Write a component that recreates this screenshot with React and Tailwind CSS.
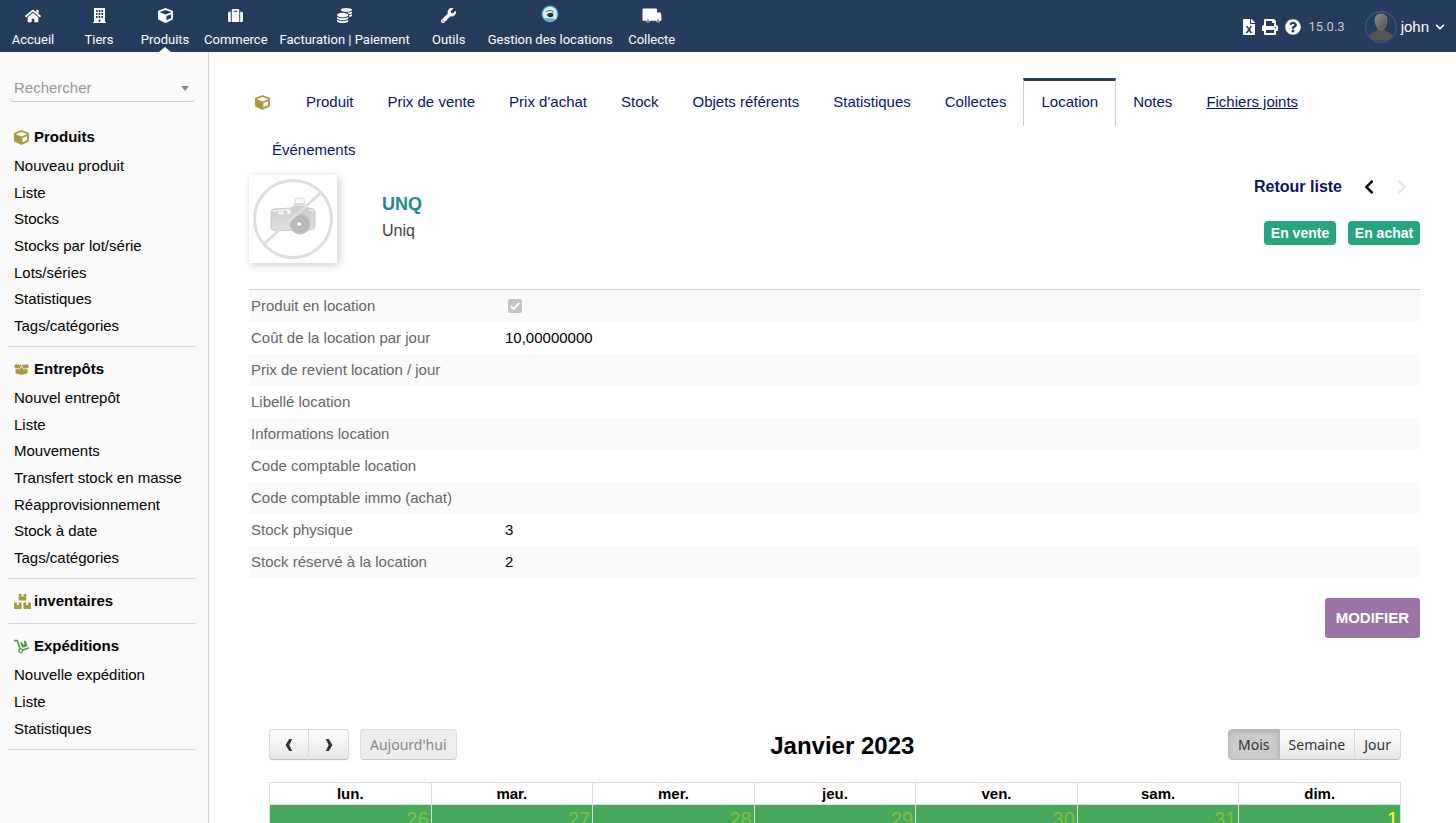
import {
  FaHome, FaCube, FaSuitcase, FaCoins, FaWrench, FaFileExcel, FaPrint,
  FaQuestionCircle, FaBoxOpen, FaBoxes, FaDolly, FaChevronLeft, FaChevronRight, FaChevronDown,
} from "react-icons/fa";

function BuildingIcon() {
  return (
    <svg viewBox="0 0 13 15" className="h-[15px] w-[13px]" aria-hidden="true">
      <path d="M1 0h11v14h1v1H0v-1h1z" fill="#fff" />
      <path d="M3 2h1.600v2H3zM5.700 2h1.600v2H5.700zM8.400 2H10v2H8.400zM3 5h1.600v2H3zM5.700 5h1.600v2H5.700zM8.400 5H10v2H8.400zM3 8h1.600v2H3zM5.700 8h1.600v2H5.700zM8.400 8H10v2H8.400zM5.700 11.500h1.600V14H5.700z" fill="#263c5c" />
    </svg>
  );
}

function LocationLogo() {
  return (
    <svg viewBox="0 0 18 18" className="size-[18px]" aria-hidden="true">
      <circle cx="9" cy="9" r="8.500" fill="#3f97b0" />
      <circle cx="9" cy="9" r="7.600" fill="#9edbe0" />
      <path d="M3 5.500a7 7 0 0 1 12 0l.5 8.500h-3L5 14.500A7 7 0 0 1 3 5.500z" fill="#d3f2f2" />
      <path d="M3 13.500c2 3 8 4 11 .5l-3-.8H6z" fill="#62b5c1" />
      <path d="M5.200 6.800c1.200-1.700 6.500-1.900 7 .4" fill="none" stroke="#2e8583" strokeWidth="1.200" />
      <path d="M6 9.500c.8-1.800 5-2 6.200-1v2.800c-1.500 1.200-5.800 1.200-6.200-1.800z" fill="#15191f" />
      <path d="M6.800 9.800h4.500" stroke="#b8564d" strokeWidth=".6" />
    </svg>
  );
}

function TruckIcon() {
  return (
    <svg viewBox="0 0 20 15" className="h-[15px] w-5" fill="#fff" aria-hidden="true">
      <path d="M1.300.5h12.900q.8 0 .8.800V4.500h3q1 .2 1.200 1.500l.3 6.800h-1.400a2.100 2.100 0 0 1-4.100 0H8a2.100 2.100 0 0 1-4.100 0H.5V1.300q0-.8.800-.8z" />
      <circle cx="6" cy="12.700" r="1.200" fill="#263c5c" />
      <circle cx="16" cy="12.700" r="1.200" fill="#263c5c" />
      <circle cx="6" cy="12.700" r=".7" />
      <circle cx="16" cy="12.700" r=".7" />
    </svg>
  );
}

function Avatar() {
  return (
    <svg viewBox="0 0 32 32" className="size-8" aria-hidden="true">
      <defs>
        <linearGradient id="skin" x1="0" y1="0" x2="1" y2="1">
          <stop offset="0" stopColor="#8b8b8b" />
          <stop offset=".5" stopColor="#6e6e6e" />
          <stop offset="1" stopColor="#4c4d46" />
        </linearGradient>
      </defs>
      <circle cx="16" cy="16" r="15.500" fill="#263c5c" stroke="#49617f" />
      <path d="M16 2.500c4.500 0 6.500 3 6.300 7.200-.2 3.500-1.500 5.500-2.600 7.300v2.800c2.500 1.500 6.800 1.800 8 5.700A15 15 0 0 1 22 29.500H10a15 15 0 0 1-5.700-4c1.200-3.900 5.500-4.200 8-5.700V17c-1.100-1.800-2.400-3.800-2.600-7.300C9.500 5.500 11.500 2.500 16 2.500z" fill="#55574f" />
      <path d="M16 3c4.200 0 6 2.800 5.800 6.700-.3 5-3 9.300-5.800 9.300s-5.500-4.300-5.800-9.300C10 5.800 11.800 3 16 3z" fill="url(#skin)" stroke="#908f8a" strokeWidth=".5" />
    </svg>
  );
}

function NoPhoto() {
  return (
    <svg viewBox="0 0 80 80" className="size-20" role="img" aria-label="Pas de photo">
      <defs>
        <linearGradient id="body" x1="0" y1="0" x2="0" y2="1">
          <stop offset="0" stopColor="#cccccc" />
          <stop offset="1" stopColor="#e0e0e0" />
        </linearGradient>
        <radialGradient id="lens">
          <stop offset="0" stopColor="#f5f5f5" />
          <stop offset=".3" stopColor="#a8a8a8" />
          <stop offset=".55" stopColor="#d0d0d0" />
          <stop offset=".75" stopColor="#b4b4b4" />
          <stop offset="1" stopColor="#c8c8c8" />
        </radialGradient>
      </defs>
      <path d="M41 28l1-7q.4-2 2.500-2h4q2.500 0 2.800 2l1 7z" fill="#f6f6f6" stroke="#dadada" />
      <path d="M42 25h9" stroke="#cccccc" strokeWidth="1.500" />
      <path d="M18 33q0-3 3-3l17-1 4-2h10l4 2 4 1q2 .5 2 3v14q0 3-3 3.500l-6 1H24l-4-.5q-2-.5-2-3z" fill="url(#body)" stroke="#cccccc" />
      <path d="M19.500 32l17-1.500M56 31l5 1" stroke="#f4f4f4" strokeWidth="1.500" />
      <rect x="25" y="32.500" width="6" height="3" rx="1.500" fill="#f4f4f4" />
      <rect x="34" y="31" width="4" height="4" rx="1" fill="#f6f6f6" />
      <circle cx="47" cy="45" r="10" fill="url(#lens)" stroke="#c0c0c0" />
      <circle cx="47" cy="45" r="6" fill="none" stroke="#adadad" />
      <circle cx="46" cy="45" r="2" fill="#fff" />
      <path d="M11.500 64.500L67.500 14" stroke="#dedede" strokeWidth="3" />
      <circle cx="40" cy="40" r="38.500" fill="none" stroke="#dedede" strokeWidth="3" />
    </svg>
  );
}

const menu = [
  { label: "Accueil", icon: <FaHome className="size-4" /> },
  { label: "Tiers", icon: <BuildingIcon /> },
  { label: "Produits", icon: <FaCube className="size-[15px]" />, active: true },
  { label: "Commerce", icon: <FaSuitcase className="size-[15px]" /> },
  { label: "Facturation | Paiement", icon: <FaCoins className="size-[15px]" /> },
  { label: "Outils", icon: <FaWrench className="size-[15px]" /> },
  { label: "Gestion des locations", icon: <LocationLogo />, raised: true },
  { label: "Collecte", icon: <TruckIcon /> },
];

const tabs = [
  "Produit", "Prix de vente", "Prix d'achat", "Stock", "Objets référents", "Statistiques",
  "Collectes", "Location", "Notes", "Fichiers joints", "Événements",
];

const rows = [
  ["Produit en location", "check"],
  ["Coût de la location par jour", "10,00000000"],
  ["Prix de revient location / jour", ""],
  ["Libellé location", ""],
  ["Informations location", ""],
  ["Code comptable location", ""],
  ["Code comptable immo (achat)", ""],
  ["Stock physique", "3"],
  ["Stock réservé à la location", "2"],
];

const days = [
  ["lun.", 26], ["mar.", 27], ["mer.", 28], ["jeu.", 29], ["ven.", 30], ["sam.", 31], ["dim.", 1],
];

function TopBar() {
  return (
    <header className="flex h-[52px] shrink-0 justify-between bg-[#263c5c] text-white">
      <nav className="flex font-['Roboto',sans-serif] text-[13px]">
        {menu.map((m) => (
          <a key={m.label} href="#" className="relative flex min-w-[66px] flex-col items-center px-1.5 whitespace-nowrap">
            <span className={m.raised ? "flex h-[31px] items-center pb-1" : "flex h-[31px] items-center"}>{m.icon}</span>
            <span className="leading-[17px]">{m.label}</span>
            {m.active && (
              <span className="absolute bottom-0 h-0 w-0 border-x-[6px] border-b-[5px] border-x-transparent border-b-white" />
            )}
          </a>
        ))}
      </nav>
      <div className="flex items-center pt-0.5 pr-[11px]">
        <a href="#" aria-label="Exporter"><FaFileExcel className="size-4" /></a>
        <a href="#" aria-label="Imprimer" className="ml-[5px]"><FaPrint className="size-4" /></a>
        <a href="#" aria-label="Aide" className="ml-[7px]"><FaQuestionCircle className="size-4" /></a>
        <span className="ml-2 font-['Roboto',sans-serif] text-[13px] text-[#c3cad4]">15.0.3</span>
        <button type="button" className="ml-5 flex items-center">
          <Avatar />
          <span className="ml-1 text-[15px]">john</span>
          <FaChevronDown className="ml-1.5 size-[10px]" />
        </button>
      </div>
    </header>
  );
}

function SideBlock({ title, icon, items }) {
  return (
    <section className={items ? "border-b border-[#d8d8d8] pt-2.5 pb-[7px]" : "border-b border-[#d8d8d8] py-2.5"}>
      <h2 className="flex h-6 items-center pl-1.5 font-bold">
        <span className="w-5 shrink-0">{icon}</span>
        <a href="#">{title}</a>
      </h2>
      {items && (
        <ul className={items.length > 3 ? "mt-1 flex h-[186px] flex-col justify-between pl-1.5" : "mt-1 flex h-20 flex-col justify-between pl-1.5"}>
          {items.map((i) => (
            <li key={i} className="leading-[26px]"><a href="#">{i}</a></li>
          ))}
        </ul>
      )}
    </section>
  );
}

function Sidebar() {
  return (
    <aside className="w-[209px] shrink-0 border-r border-[#d8d8d8] bg-[#fafafa] pr-3 pl-2 text-[15px]">
      <button
        type="button"
        aria-haspopup="listbox"
        className="mx-0.5 mt-[23px] flex h-[27px] w-[185px] items-center justify-between rounded-sm border-b border-[#c8c8c8] pr-1.5 pl-1 text-[#999]"
      >
        Rechercher
        <span className="h-0 w-0 border-x-4 border-t-[5px] border-x-transparent border-t-[#888]" />
      </button>
      <nav className="mt-[13px]">
        <SideBlock
          title="Produits"
          icon={<FaCube className="size-[15px] text-[#a69944]" />}
          items={["Nouveau produit", "Liste", "Stocks", "Stocks par lot/série", "Lots/séries", "Statistiques", "Tags/catégories"]}
        />
        <SideBlock
          title="Entrepôts"
          icon={<FaBoxOpen className="size-[15px] text-[#a69944]" />}
          items={["Nouvel entrepôt", "Liste", "Mouvements", "Transfert stock en masse", "Réapprovisionnement", "Stock à date", "Tags/catégories"]}
        />
        <SideBlock title="inventaires" icon={<FaBoxes className="size-[17px] text-[#a69944]" />} />
        <SideBlock
          title="Expéditions"
          icon={<FaDolly className="size-[15px] text-[#599645]" />}
          items={["Nouvelle expédition", "Liste", "Statistiques"]}
        />
      </nav>
    </aside>
  );
}

function Tabs() {
  return (
    <nav className="flex flex-wrap pl-1.5 text-[15px] text-[#0a1464]">
      <a href="#" aria-label="Produit" className="flex h-12 items-center pr-[19px]">
        <FaCube className="size-[15px] text-[#a69944]" />
      </a>
      {tabs.map((t) => (
        <a
          key={t}
          href="#"
          className={
            t === "Location"
              ? "flex h-12 items-center border-x border-t-[3px] border-x-[#ccc] border-t-[#263c5c] px-[17px] pb-[3px]"
              : t === "Fichiers joints"
                ? "flex h-12 items-center px-[17px] underline"
                : "flex h-12 items-center px-[17px]"
          }
        >
          {t}
        </a>
      ))}
    </nav>
  );
}

function Banner() {
  return (
    <div className="mt-px flex items-start">
      <div className="bg-white p-1 shadow-[2px_2px_8px_rgba(0,0,0,0.2)]"><NoPhoto /></div>
      <div className="ml-[45px] pt-4">
        <h1 className="text-lg leading-[26px] font-bold text-[#25888a]">UNQ</h1>
        <p className="text-base leading-7 text-[#444]">Uniq</p>
      </div>
      <div className="ml-auto flex flex-col items-end">
        <div className="flex h-6 items-center pr-2.5">
          <a href="#" className="text-base font-bold text-[#0a1464]">Retour liste</a>
          <a href="#" aria-label="Précédent" className="ml-[19px]"><FaChevronLeft className="size-4" /></a>
          <FaChevronRight className="ml-[17px] size-4 text-[#e8e8e8]" />
        </div>
        <div className="mt-[22px] flex gap-3 text-sm font-bold text-white">
          <span className="flex h-6 w-[72px] items-center justify-center rounded bg-[#25a580]">En vente</span>
          <span className="flex h-6 w-[72px] items-center justify-center rounded bg-[#25a580]">En achat</span>
        </div>
      </div>
    </div>
  );
}

function Details() {
  return (
    <div className="mt-[26px] border-t border-[#d0d0d0]">
      <table className="w-full text-[15px]">
        <tbody>
          {rows.map(([label, value]) => (
            <tr key={label} className="h-8 odd:bg-[#fafafa]">
              <th scope="row" className="w-[254px] px-0.5 text-left leading-6 font-normal text-[#666]">
                {value === "check" ? <label htmlFor="rental">{label}</label> : label}
              </th>
              <td className="px-0.5 leading-6">
                {value === "check" ? (
                  <span className="relative ml-[3px] flex size-3.5">
                    <input id="rental" type="checkbox" defaultChecked disabled className="size-3.5 appearance-none rounded-xs bg-[#c4c4ca]" />
                    <svg viewBox="0 0 14 14" className="absolute inset-0 size-3.5" fill="none" stroke="#fff" strokeWidth="2" aria-hidden="true">
                      <path d="M3 7.300l2.700 2.700L11.200 4" />
                    </svg>
                  </span>
                ) : value}
              </td>
            </tr>
          ))}
        </tbody>
      </table>
    </div>
  );
}

function Calendar() {
  return (
    <section className="mt-[91px] pr-[19px] pl-5">
      <div className="flex items-center justify-between">
        <div className="flex h-[31px] font-['Noto_Sans',sans-serif] text-sm text-[#333]">
          <div className="flex rounded shadow-[0_1px_2px_rgba(0,0,0,0.05)]">
            <button type="button" aria-label="Mois précédent" className="flex w-10 items-center justify-center rounded-l border border-[#d9d9d9] border-b-[#bbb] bg-linear-to-b from-white to-[#e6e6e6]">
              <svg viewBox="0 0 8 12" className="h-3 w-2" fill="#333" aria-hidden="true"><path d="M4.200 0h3L4.300 6l2.900 6h-3L.6 6z" /></svg>
            </button>
            <button type="button" aria-label="Mois suivant" className="flex w-10 items-center justify-center rounded-r border border-l-0 border-[#d9d9d9] border-b-[#bbb] bg-linear-to-b from-white to-[#e6e6e6]">
              <svg viewBox="0 0 8 12" className="h-3 w-2" fill="#333" aria-hidden="true"><path d="M3.800 0h-3L3.700 6 .8 12h3L7.400 6z" /></svg>
            </button>
          </div>
          <button type="button" disabled className="ml-[11px] rounded border border-[#dedede] border-b-[#c8c8c8] bg-[#ededed] px-[9px] text-[#888]">Aujourd'hui</button>
        </div>
        <h2 className="pt-0.5 text-2xl leading-7 font-bold">Janvier 2023</h2>
        <div className="flex h-[31px] font-['Noto_Sans',sans-serif] text-sm text-[#333]">
          <button type="button" className="rounded-l border border-[#bbb] bg-[#ccc] px-[9px] shadow-[inset_0_2px_4px_rgba(0,0,0,0.15)]">Mois</button>
          <button type="button" className="border-y border-r border-[#d9d9d9] border-b-[#bbb] bg-linear-to-b from-white to-[#e6e6e6] px-[9px]">Semaine</button>
          <button type="button" className="rounded-r border border-l-0 border-[#d9d9d9] border-b-[#bbb] bg-linear-to-b from-white to-[#e6e6e6] px-[9px]">Jour</button>
        </div>
      </div>
      <table className="mt-[22px] w-full table-fixed border-collapse">
        <thead>
          <tr>
            {days.map(([d]) => (
              <th key={d} scope="col" className="h-[22px] border border-[#ddd] text-[15px] leading-5 font-bold">{d}</th>
            ))}
          </tr>
        </thead>
        <tbody>
          <tr>
            {days.map(([d, n]) => (
              <td
                key={d}
                className={
                  n === 1
                    ? "h-28 border border-[#ddd] bg-[#48a95c] px-0.5 pt-0.5 text-right align-top text-xl leading-6 text-[#ffff00]"
                    : "h-28 border border-[#ddd] bg-[#48a95c] px-0.5 pt-0.5 text-right align-top text-xl leading-6 text-[#7fc142]"
                }
              >
                {n}
              </td>
            ))}
          </tr>
        </tbody>
      </table>
    </section>
  );
}

export default function App() {
  return (
    <div className="flex h-screen flex-col overflow-hidden bg-white font-['Liberation_Sans',Arial,sans-serif] text-black">
      <TopBar />
      <div className="flex min-h-0 flex-1">
        <Sidebar />
        <main className="min-w-0 flex-1 overflow-hidden pt-[26px] pr-9 pl-10">
          <Tabs />
          <Banner />
          <Details />
          <div className="mt-5 flex justify-end">
            <button type="button" className="h-10 rounded-[3px] bg-[#9c73a7] px-[11px] text-[15px] font-bold text-white uppercase">Modifier</button>
          </div>
          <Calendar />
        </main>
      </div>
    </div>
  );
}
